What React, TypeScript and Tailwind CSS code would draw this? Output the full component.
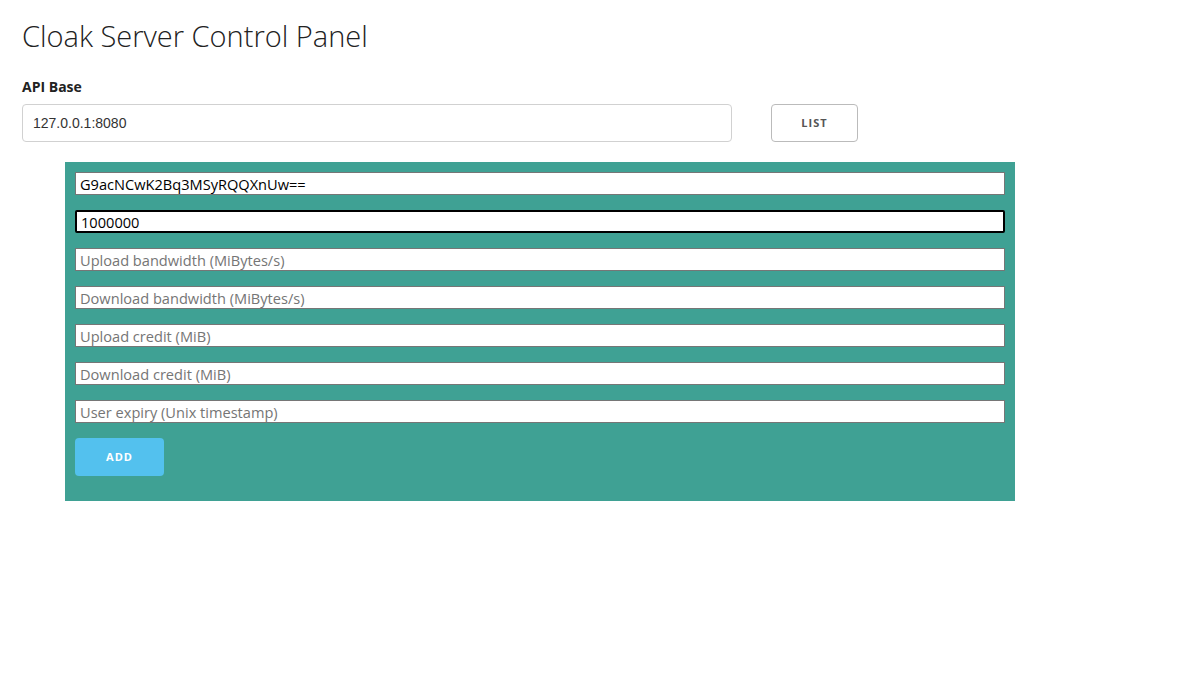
import { useState } from 'react';

const FIELDS = [
  { key: 'uid', placeholder: 'UID', initial: 'G9acNCwK2Bq3MSyRQQXnUw==' },
  { key: 'session', placeholder: 'Session limit', initial: '1000000' },
  { key: 'upRate', placeholder: 'Upload bandwidth (MiBytes/s)', initial: '' },
  { key: 'downRate', placeholder: 'Download bandwidth (MiBytes/s)', initial: '' },
  { key: 'upCredit', placeholder: 'Upload credit (MiB)', initial: '' },
  { key: 'downCredit', placeholder: 'Download credit (MiB)', initial: '' },
  { key: 'expiry', placeholder: 'User expiry (Unix timestamp)', initial: '' },
];

const uiFont = { fontFamily: '"Open Sans", "Noto Sans", sans-serif' };

export default function App() {
  const [apiBase, setApiBase] = useState('127.0.0.1:8080');
  const [values, setValues] = useState<Record<string, string>>(
    Object.fromEntries(FIELDS.map((f) => [f.key, f.initial]))
  );

  return (
    <div className="min-h-[698px] bg-white text-[#222]" style={uiFont}>
      <div className="px-[22px] pt-[18px]">
        <h1 className="text-[29px] font-light leading-[36px] text-[#222]">
          Cloak Server Control Panel
        </h1>

        <label className="block mt-[24px] text-[14px] font-bold leading-[18px]">API Base</label>
        <div className="flex items-center gap-[39px] mt-[8px]">
          <input
            value={apiBase}
            onChange={(e) => setApiBase(e.target.value)}
            className="w-[710px] h-[38px] px-[10px] border border-[#d1d1d1] rounded-[4px] text-[14px] text-[#333] outline-none"
            style={{ fontFamily: '"Liberation Sans", Arial, sans-serif' }}
          />
          <button className="w-[87px] h-[38px] border border-[#bbb] rounded-[4px] bg-transparent text-[11px] font-bold tracking-[1px] text-[#555]">
            LIST
          </button>
        </div>
      </div>

      <div className="ml-[65px] mt-[20px] w-[950px] bg-[#3fa194] px-[10px] pt-[10px] pb-[25px]">
        <div className="flex flex-col gap-[15px]">
          {FIELDS.map((f) => (
            <input
              key={f.key}
              value={values[f.key]}
              placeholder={f.placeholder}
              onChange={(e) => setValues({ ...values, [f.key]: e.target.value })}
              className={
                'w-full h-[23px] px-[4px] bg-white text-[14.6px] text-black placeholder:text-[#757575] ' +
                (f.key === 'session'
                  ? 'border-2 border-black rounded-[2px]'
                  : 'border border-[#767676]')
              }
            />
          ))}
        </div>
        <button className="mt-[15px] w-[89px] h-[38px] rounded-[4px] bg-[#53c1ee] text-white text-[11px] font-bold tracking-[1px]">
          ADD
        </button>
      </div>
    </div>
  );
}
